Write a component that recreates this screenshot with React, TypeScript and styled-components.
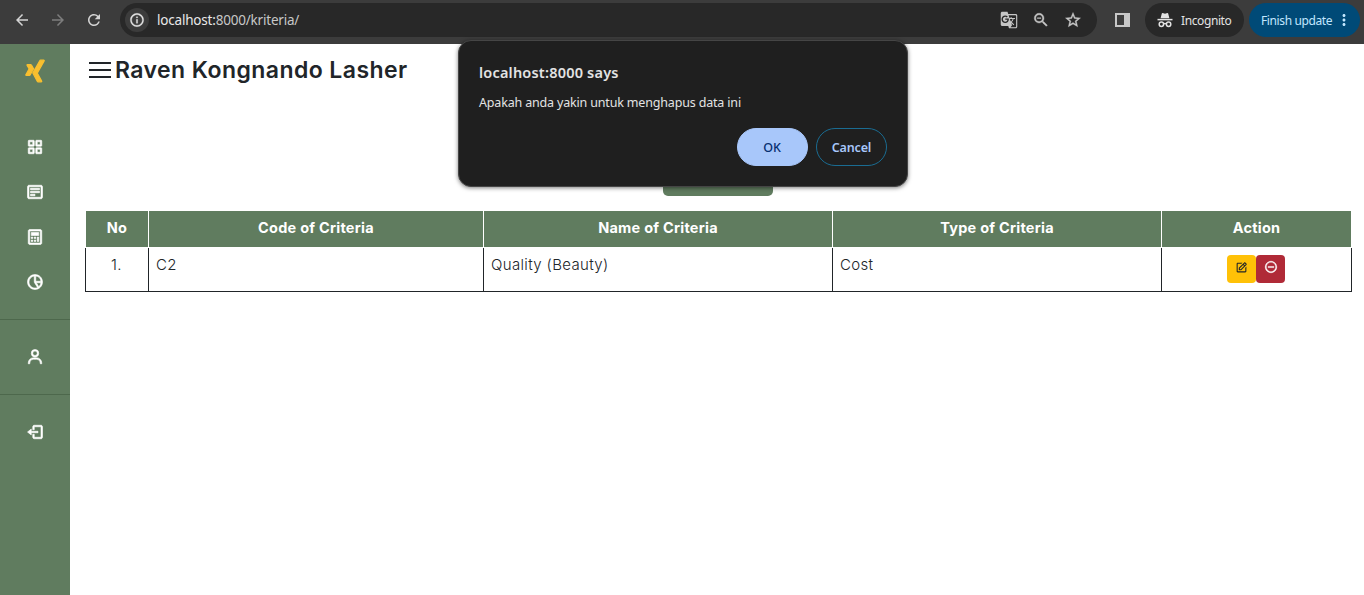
import React from "react";
import styled, { createGlobalStyle } from "styled-components";
import {
  BiGridAlt,
  BiDetail,
  BiCalculator,
  BiPieChartAlt2,
  BiUser,
  BiLogOut,
  BiLogoXing,
  BiEdit,
  BiMinusCircle,
} from "react-icons/bi";
import {
  MdArrowBack,
  MdArrowForward,
  MdRefresh,
  MdInfoOutline,
  MdGTranslate,
  MdZoomOut,
  MdStarBorder,
  MdMoreVert,
} from "react-icons/md";

const GREEN = "#607c5f";
const CHROME_FONT = '"Noto Sans", "Open Sans", sans-serif';
const PAGE_FONT = 'Inter, "Open Sans", sans-serif';

const GlobalStyle = createGlobalStyle`
  *, *::before, *::after { box-sizing: border-box; }
  body { margin: 0; background: #fff; overflow: hidden; }
  button { font: inherit; padding: 0; border: 0; margin: 0; }
`;

const Window = styled.div`
  position: relative;
  display: flex;
  flex-direction: column;
  width: 1364px;
  height: 595px;
  overflow: hidden;
  background: #fff;
`;

const Toolbar = styled.header`
  display: flex;
  align-items: center;
  flex: 0 0 44px;
  padding: 0 4px 4px 13px;
  background: #3c3c3c;
  font-family: ${CHROME_FONT};
`;

const NavButtons = styled.nav`
  display: flex;
  gap: 18px;
  width: 107px;
`;

const NavIcon = styled.span<{ $dim?: boolean }>`
  display: flex;
  color: ${(p) => (p.$dim ? "#7d7d7d" : "#d4d4d4")};
`;

const AddressBar = styled.div`
  display: flex;
  align-items: center;
  width: 977px;
  height: 34px;
  padding: 0 15px 0 5px;
  border-radius: 17px;
  background: #282828;
`;

const SiteInfo = styled.span`
  display: flex;
  align-items: center;
  justify-content: center;
  width: 24px;
  height: 24px;
  border-radius: 50%;
  background: #3c3c3c;
  color: #e3e3e3;

  path:not([fill="none"]) { stroke: currentColor; stroke-width: 0.4px; }
`;

const Url = styled.span`
  flex: 1;
  margin-left: 8px;
  color: #c7c7c7;
  font-size: 13.5px;
  line-height: 20px;
  letter-spacing: -0.2px;
`;

const UrlHost = styled.span`
  color: #e8e8e8;
`;

const BarIcons = styled.span`
  display: flex;
  align-items: center;
  gap: 14px;
  color: #c7c7c7;

  svg:not(:first-child) path:not([fill="none"]) { stroke: currentColor; stroke-width: 0.5px; }
`;

const PanelToggle = styled.span`
  width: 15px;
  height: 14px;
  margin: 0 15px 0 18px;
  border: 2px solid #c7c7c7;
  border-right-width: 6px;
`;

const Chip = styled.span<{ $accent?: boolean }>`
  display: flex;
  align-items: center;
  width: ${(p) => (p.$accent ? 111 : 99)}px;
  height: 34px;
  padding-left: 12px;
  margin-right: ${(p) => (p.$accent ? 0 : 5)}px;
  border-radius: 17px;
  background: ${(p) => (p.$accent ? "#004a77" : "#282828")};
  color: ${(p) => (p.$accent ? "#c2e7ff" : "#e3e3e3")};
  font-size: 12px;
  letter-spacing: ${(p) => (p.$accent ? -0.38 : -0.4)}px;
  white-space: nowrap;
  gap: ${(p) => (p.$accent ? 3 : 8)}px;
`;

const Body = styled.div`
  display: flex;
  flex: 1;
`;

const Sidebar = styled.aside`
  display: flex;
  flex-direction: column;
  flex: 0 0 70px;
  background: ${GREEN};
  color: #fff;
`;

const Brand = styled.div`
  display: flex;
  justify-content: center;
  height: 80px;
  padding-top: 14px;
  color: #f8bf2f;

  svg { stroke: currentColor; stroke-width: 1.1px; }
`;

const MenuGroup = styled.ul<{ $last?: boolean }>`
  margin: 0;
  padding: 0 0 15px;
  list-style: none;
  border-bottom: ${(p) => (p.$last ? "0" : "1px solid #4d684c")};
  & + & { padding-top: 14px; }
`;

const MenuItem = styled.li`
  display: flex;
  align-items: center;
  justify-content: center;
  height: 45px;
  padding-top: 1px;

  svg { stroke: currentColor; stroke-width: 0.8px; }
`;

const Content = styled.main`
  display: flex;
  flex-direction: column;
  align-items: flex-start;
  flex: 1;
  padding: 9px 12px 0 15px;
  color: #212529;
  font-family: ${PAGE_FONT};
`;

const Heading = styled.div`
  display: flex;
  align-items: center;
  height: 34px;
  gap: 4px;
  padding-left: 4px;
`;

const Burger = styled.span`
  display: flex;
  flex-direction: column;
  justify-content: space-between;
  width: 22px;
  height: 16px;
`;

const BurgerLine = styled.i`
  height: 2px;
  background: #212529;
`;

const Title = styled.h1`
  margin: 0;
  font-size: 23px;
  line-height: 34px;
  font-weight: 600;
  letter-spacing: 0.43px;
  white-space: nowrap;
`;

const AddButton = styled.button`
  align-self: center;
  width: 110px;
  height: 36px;
  margin: 73px 2px 15px 0;
  border-radius: 5px;
  background: ${GREEN};
`;

const Table = styled.div`
  width: 1267px;
`;

const Row = styled.div<{ $head?: boolean }>`
  display: grid;
  grid-template-columns: 63px 335px 349px 329px 190px;
  height: ${(p) => (p.$head ? 37 : 44)}px;
  border: solid ${(p) => (p.$head ? "#fff" : "#212529")};
  border-width: 0 1px 1px 0;
`;

const HeadCell = styled.div`
  border-left: 1px solid #fff;
  background: ${GREEN};
  color: #fff;
  font-size: 14.5px;
  line-height: 34px;
  font-weight: 700;
  letter-spacing: 0.25px;
  text-align: center;
`;

const Cell = styled.div<{ $center?: boolean }>`
  display: flex;
  justify-content: ${(p) => (p.$center ? "center" : "flex-start")};
  padding: 7px 8px 0 7px;
  border-left: 1px solid #212529;
  font-size: 15px;
  line-height: 20px;
  letter-spacing: 0.35px;
  font-weight: 300;
`;

const ActionButton = styled.button<{ $danger?: boolean }>`
  display: flex;
  justify-content: center;
  width: 29px;
  height: 28px;
  padding-top: ${(p) => (p.$danger ? 5 : 6)}px;
  border-radius: 4px;
  background: ${(p) => (p.$danger ? "#b02a37" : "#ffc107")};
  color: ${(p) => (p.$danger ? "#fff" : "#212529")};

  svg { stroke: currentColor; stroke-width: ${(p) => (p.$danger ? 0.6 : 0)}px; }
`;

const Dialog = styled.section`
  position: absolute;
  left: 458px;
  top: 40px;
  width: 450px;
  height: 147px;
  padding: 21px 20px 0;
  border: 1px solid #454545;
  border-radius: 13px;
  background: #1f1f1f;
  box-shadow: 0 1px 4px rgba(0, 0, 0, 0.5);
  color: #e3e3e3;
  font-family: ${CHROME_FONT};
`;

const DialogTitle = styled.h2`
  margin: 0;
  font-size: 14.5px;
  line-height: 20px;
  font-weight: 600;
  letter-spacing: 0.2px;
  white-space: nowrap;
`;

const DialogText = styled.p`
  margin: 11px 0 0;
  font-size: 12.5px;
  line-height: 20px;
  letter-spacing: -0.17px;
  white-space: nowrap;
`;

const DialogActions = styled.div`
  display: flex;
  justify-content: flex-end;
  gap: 8px;
  margin-top: 15px;
`;

const DialogButton = styled.button<{ $primary?: boolean }>`
  width: 71px;
  height: 38px;
  padding-right: ${(p) => (p.$primary ? 1 : 0)}px;
  border: 1px solid ${(p) => (p.$primary ? "#a8c7fa" : "#1a6c92")};
  border-radius: 19px;
  background: ${(p) => (p.$primary ? "#a8c7fa" : "transparent")};
  color: ${(p) => (p.$primary ? "#062e6f" : "#a8c7fa")};
  font-size: 12.5px;
  letter-spacing: -0.15px;
  font-weight: ${(p) => (p.$primary ? 500 : 600)};
`;

const IncognitoIcon = () => (
  <svg width="16" height="16" viewBox="0 0 16 16" fill="none">
    <path d="M3.6 6.3 4.8 1.6Q5 1 5.7 1.1L8 1.7l2.3-.6q.7-.1.9.5l1.2 4.7z" fill="currentColor" />
    <path d="M.5 7.6h15" stroke="currentColor" strokeWidth="1.5" />
    <circle cx="4.4" cy="12.2" r="2.2" stroke="currentColor" strokeWidth="1.5" />
    <circle cx="11.6" cy="12.2" r="2.2" stroke="currentColor" strokeWidth="1.5" />
    <path d="M6.5 12q1.5-1 3 0" stroke="currentColor" strokeWidth="1.3" />
  </svg>
);

const menuGroups = [
  [BiGridAlt, BiDetail, BiCalculator, BiPieChartAlt2],
  [BiUser],
  [BiLogOut],
];

const columns = ["No", "Code of Criteria", "Name of Criteria", "Type of Criteria", "Action"];

export default function App() {
  return (
    <Window>
      <GlobalStyle />
      <Toolbar>
        <NavButtons>
          <NavIcon><MdArrowBack size={18} /></NavIcon>
          <NavIcon $dim><MdArrowForward size={18} /></NavIcon>
          <NavIcon><MdRefresh size={18} /></NavIcon>
        </NavButtons>
        <AddressBar>
          <SiteInfo><MdInfoOutline size={16} /></SiteInfo>
          <Url><UrlHost>localhost:</UrlHost>8000/kriteria/</Url>
          <BarIcons>
            <MdGTranslate size={18} />
            <MdZoomOut size={18} />
            <MdStarBorder size={18} />
          </BarIcons>
        </AddressBar>
        <PanelToggle />
        <Chip><IncognitoIcon />Incognito</Chip>
        <Chip $accent>Finish update<MdMoreVert size={18} /></Chip>
      </Toolbar>
      <Body>
        <Sidebar>
          <Brand><BiLogoXing size={26} /></Brand>
          {menuGroups.map((icons, i) => (
            <MenuGroup key={i} $last={i === menuGroups.length - 1}>
              {icons.map((Icon, j) => (
                <MenuItem key={j}><Icon size={18} /></MenuItem>
              ))}
            </MenuGroup>
          ))}
        </Sidebar>
        <Content>
          <Heading>
            <Burger><BurgerLine /><BurgerLine /><BurgerLine /></Burger>
            <Title>Raven Kongnando Lasher</Title>
          </Heading>
          <AddButton />
          <Table>
            <Row $head>
              {columns.map((name) => <HeadCell key={name}>{name}</HeadCell>)}
            </Row>
            <Row>
              <Cell $center>1.</Cell>
              <Cell>C2</Cell>
              <Cell>Quality (Beauty)</Cell>
              <Cell>Cost</Cell>
              <Cell $center>
                <ActionButton><BiEdit size={13} /></ActionButton>
                <ActionButton $danger><BiMinusCircle size={14} /></ActionButton>
              </Cell>
            </Row>
          </Table>
        </Content>
      </Body>
      <Dialog>
        <DialogTitle>localhost:8000 says</DialogTitle>
        <DialogText>Apakah anda yakin untuk menghapus data ini</DialogText>
        <DialogActions>
          <DialogButton $primary>OK</DialogButton>
          <DialogButton>Cancel</DialogButton>
        </DialogActions>
      </Dialog>
    </Window>
  );
}
